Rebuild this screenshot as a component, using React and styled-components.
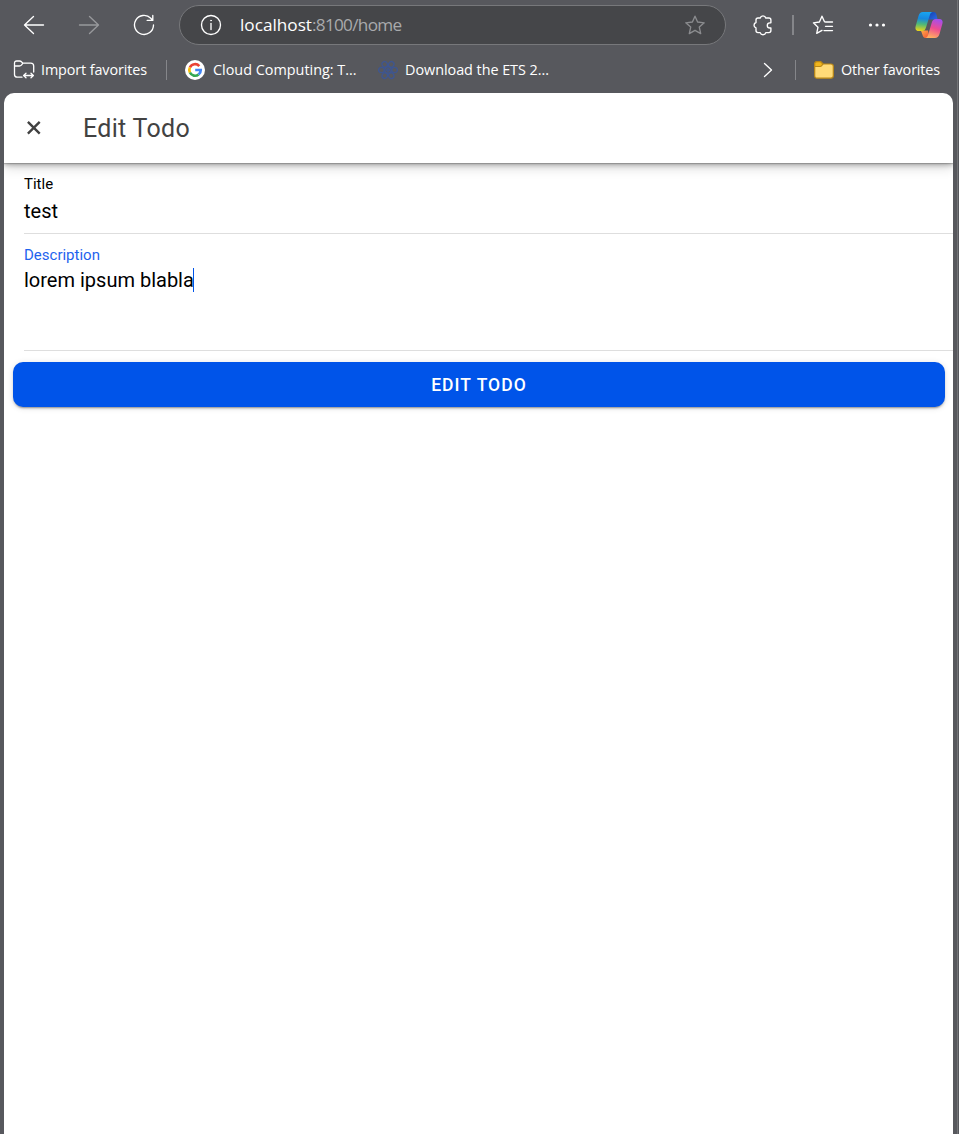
import React from "react";
import styled, { createGlobalStyle } from "styled-components";

const GlobalStyle = createGlobalStyle`
  * { box-sizing: border-box; }
  body { margin: 0; background: #57585d; overflow: hidden; }
`;

const Window = styled.div`
  width: 959px;
  height: 1134px;
  display: flex;
  flex-direction: column;
  padding: 0 4px 0 4px;
  background: linear-gradient(to right, #57585d 957px, #737477 957px, #737477 958px, #57585d 958px);
  overflow: hidden;
`;

const Toolbar = styled.div`
  height: 50px;
  flex: none;
  display: flex;
  align-items: center;
  padding-left: 2px;
`;

const IconSlot = styled.div`
  width: ${(p) => p.$width || 55}px;
  height: 40px;
  flex: none;
  display: flex;
  align-items: center;
  justify-content: center;
`;

const Address = styled.div`
  width: 547px;
  height: 40px;
  flex: none;
  margin: 0 7px 0 8px;
  padding: 0 19px 0 20px;
  border: 1px solid #77787b;
  border-radius: 20px;
  background: #454649;
  display: flex;
  align-items: center;
`;

const Url = styled.div`
  flex: 1;
  margin-left: 18px;
  padding-bottom: 1px;
  font: 17.2px/24px "Open Sans", "Noto Sans", sans-serif;
  letter-spacing: -0.72px;
  color: #a9aaac;
  white-space: nowrap;
`;

const Host = styled.span`
  color: #ffffff;
  letter-spacing: 0;
`;

const Divider = styled.div`
  width: ${(p) => p.$width}px;
  height: 20px;
  flex: none;
  background: #85868a;
`;

const Spacer = styled.span`
  width: ${(p) => p.$width || 10}px;
  flex: none;
`;

const Bookmarks = styled.div`
  height: 43px;
  flex: none;
  display: flex;
  align-items: center;
  padding: 0 13px 4px 9px;
`;

const Bookmark = styled.div`
  display: flex;
  align-items: center;
  gap: ${(p) => p.$gap}px;
  width: ${(p) => p.$width}px;
  flex: none;
`;

const BookmarkText = styled.span`
  font: 14.4px/20px "Open Sans", "Noto Sans", sans-serif;
  letter-spacing: ${(p) => p.$spacing}px;
  color: #ffffff;
  white-space: nowrap;
`;

const Overflow = styled.div`
  flex: 1;
  display: flex;
  justify-content: flex-end;
  padding-right: 22px;
`;

const Page = styled.main`
  width: 949px;
  flex: 1;
  background: #ffffff;
  border-radius: 10px 10px 0 0;
  overflow: hidden;
  font-family: Roboto, sans-serif;
`;

const Header = styled.header`
  height: 70px;
  display: flex;
  align-items: center;
  padding-left: 20px;
  box-shadow: 0 2px 5px rgba(0, 0, 0, 0.28), 0 4px 12px rgba(0, 0, 0, 0.16), 0 1px 1px rgba(0, 0, 0, 0.18);
`;

const Heading = styled.h1`
  margin: 2px 0 0 39px;
  font-size: 25px;
  line-height: 32px;
  font-weight: 400;
  letter-spacing: 0.3px;
  color: #424242;
`;

const Field = styled.div`
  height: ${(p) => p.$height}px;
  margin-left: 20px;
  padding-top: 11px;
  border-bottom: 1px solid #dedede;
`;

const Label = styled.div`
  font-size: 15px;
  line-height: 20px;
  color: ${(p) => (p.$focused ? "#1e63ee" : "#000000")};
`;

const Value = styled.div`
  display: flex;
  align-items: center;
  margin-top: ${(p) => p.$top}px;
  font-size: 20px;
  line-height: 26px;
  color: #000000;
`;

const Caret = styled.i`
  width: 1px;
  height: 24px;
  margin-left: -1px;
  background: #0054e9;
`;

const Submit = styled.button`
  display: block;
  width: 932px;
  height: 45px;
  margin: 11px 0 0 9px;
  padding: 2px 0 0;
  border: 0;
  border-radius: 10px;
  background: #0054e9;
  color: #ffffff;
  font: 500 17.5px/43px Roboto, sans-serif;
  letter-spacing: 1.05px;
  text-align: center;
  box-shadow: 0 3px 1px -2px rgba(0, 0, 0, 0.2), 0 2px 2px rgba(0, 0, 0, 0.14), 0 1px 6px rgba(0, 0, 0, 0.12);
`;

const Line = ({ w, h, children, color = "#fff", sw = 1.35, ...rest }) => (
  <svg width={w} height={h} viewBox={`0 0 ${w} ${h}`} fill="none" stroke={color} strokeWidth={sw} strokeLinecap="round" strokeLinejoin="round" {...rest}>
    {children}
  </svg>
);

const STAR = "M11 2.2l2.6 5.8 6.6.8-4.9 4.3 1.4 6.5-5.7-3.3-5.7 3.3 1.4-6.5-4.9-4.3 6.6-.8z";

const Back = () => <Line w={22} h={20}><path d="M10.500 1.500L1.500 10l9 8.500M1.500 10h19" /></Line>;
const Forward = () => <Line w={22} h={20} color="#98999c"><path d="M11.500 1.500l9 8.500-9 8.500M20.500 10H1.500" /></Line>;
const Reload = () => (
  <Line w={22} h={22}><path d="M20.500 11a9.500 9.500 0 1 1-2.700-6.700l1.700 1.900M19.800 1.400v5h-5.600" /></Line>
);
const Info = () => (
  <Line w={22} h={22}><circle cx="11" cy="11" r="9.500" /><path d="M11 9.500v6" /><circle cx="11" cy="6.600" r=".5" fill="#fff" strokeWidth=".7" /></Line>
);
const Star = () => <Line w={22} h={22} color="#8b8c8f"><path d={STAR} /></Line>;
const Puzzle = () => (
  <Line w={22} h={22}>
    <path d="M8.200 4a2.900 2.900 0 0 1 5.600 0h3.100c1.300 0 2 .7 2 2v2.800h-1a2.600 2.600 0 0 0 0 5.200h1v2.600c0 1.300-.7 2-2 2h-3.100a2.900 2.900 0 0 1-5.600 0H6c-1.300 0-2-.7-2-2V14a2.900 2.900 0 0 1 0-5.500V6c0-1.300.7-2 2-2z" />
  </Line>
);
const Favorites = () => (
  <Line w={22} h={22}>
    <path d="M13.600 7.800H12.500L10 2.200 7.400 8l-6 .8 4.600 4.400-1.300 6.200 5.300-3M13.500 8h7M13.500 12.300h7M12 16.600h8.500" />
  </Line>
);
const Dots = () => (
  <svg width="20" height="6" viewBox="0 0 20 6" fill="#fff"><circle cx="3.500" cy="3" r="1.600" /><circle cx="10" cy="3" r="1.600" /><circle cx="16.500" cy="3" r="1.600" /></svg>
);
const Copilot = () => (
  <svg width="28" height="26" viewBox="0 0 28 26">
    <defs>
      <linearGradient id="cpA" x1=".5" y1="0" x2=".4" y2="1">
        <stop offset="0" stopColor="#18a4f0" /><stop offset=".35" stopColor="#1688df" /><stop offset=".65" stopColor="#4fb978" /><stop offset="1" stopColor="#e7d51b" />
      </linearGradient>
      <linearGradient id="cpB" x1=".7" y1="0" x2=".4" y2="1">
        <stop offset="0" stopColor="#a34ef0" /><stop offset=".5" stopColor="#ee4c91" /><stop offset="1" stopColor="#ffae60" />
      </linearGradient>
      <linearGradient id="cpC" x1="0" y1="0" x2="1" y2="1">
        <stop offset="0" stopColor="#1441ae" /><stop offset="1" stopColor="#2a6be6" />
      </linearGradient>
      <linearGradient id="cpD" x1="0" y1="0" x2="1" y2="1">
        <stop offset="0" stopColor="#ffad48" /><stop offset="1" stopColor="#ef4d35" />
      </linearGradient>
    </defs>
    <path d="M14 0h4.500c1.800 0 2.600 1 3 2.700L22.600 7.500H13.500z" fill="url(#cpC)" />
    <path d="M7 18.500h6L14.500 26H10.500C7.500 26 7.500 21.500 6 19z" fill="url(#cpD)" />
    <path d="M7.800 0H17.500C15.800.3 15.200 1.800 14.700 3.500L11 15.500C10.200 18 9.300 19 7 19H3.500C.6 19 0 16.500.7 14L3.500 4C4.300 1.300 5.600 0 7.800 0z" fill="url(#cpA)" />
    <path d="M20 26H10.500C12 25.700 12.700 24 13.200 22.500L16.800 10.500C17.500 8.200 18.700 7 20.800 7H24.500C27.500 7 28.100 9.500 27.300 12L24.500 22C23.700 24.700 22.200 26 20 26z" fill="url(#cpB)" />
  </svg>
);
const ImportIcon = () => (
  <Line w={22} h={22} sw={1.3}>
    <path d="M9 18.200H4.300c-1.800 0-2.800-1-2.800-2.800V4.200C1.500 2.700 2.300 2 3.700 2H6.500c1 0 1.600.3 2.200 1l1.200 1.200h7.800c1.900 0 3 1 3 2.900v6M1.500 7h4.800c1 0 1.500-.2 2.100-.9l1.600-1.900M10.800 16.500h9.400M13 14.200l-2.400 2.300 2.400 2.300M18 14.200l2.400 2.300-2.400 2.300" />
  </Line>
);
const GoogleIcon = () => (
  <svg width="20" height="20" viewBox="0 0 20 20">
    <circle cx="10" cy="10" r="10" fill="#fff" />
    <g fill="none" strokeWidth="2.700">
      <path d="M14.300 6.100A5.700 5.700 0 0 0 4.900 7.500" stroke="#ea4335" />
      <path d="M4.900 7.500a5.700 5.700 0 0 0 0 5" stroke="#fbbc05" />
      <path d="M4.900 12.500a5.700 5.700 0 0 0 8.700 2" stroke="#34a853" />
      <path d="M13.600 14.500A5.700 5.700 0 0 0 15.700 10H10.200" stroke="#4285f4" />
    </g>
  </svg>
);
const FlowerIcon = () => (
  <svg width="20" height="20" viewBox="0 0 20 20" fill="none" stroke="#3f568f" strokeWidth="1.400">
    {[0, 60, 120, 180, 240, 300].map((a) => (
      <ellipse key={a} cx="16.500" cy="10" rx="2.900" ry="2.600" transform={`rotate(${a} 10 10)`} />
    ))}
    <circle cx="10" cy="10" r="3.200" />
    <path d="M8 10h4M10 8v4" />
  </svg>
);
const Chevron = () => <Line w={10} h={16}><path d="M1.500 1.500L8.500 8l-7 6.500" /></Line>;
const Folder = () => (
  <svg width="20" height="18" viewBox="0 0 20 18" stroke="#b98716" strokeWidth="1.200" strokeLinejoin="round">
    <path d="M.7 3.200C.7 1.600 1.400.7 3 .7h3.600L9 3h8c1.600 0 2.300.8 2.300 2.300v9.500c0 1.600-.8 2.400-2.400 2.400H3c-1.500 0-2.300-.8-2.300-2.400z" fill="#ffdb78" />
    <path d="M.7 5.500V3.200C.7 1.600 1.400.7 3 .7h3.600L9 3 7.500 4.900c-.5.500-.8.600-1.500.6z" fill="#f0b51c" />
  </svg>
);
const Close = () => (
  <svg width="20" height="20" viewBox="0 0 20 20" fill="none" stroke="#424242" strokeWidth="2.400"><path d="M3.900 3.900l11.800 11.800M15.700 3.900L3.900 15.700" /></svg>
);

export default function App() {
  return (
    <Window>
      <GlobalStyle />
      <Toolbar>
        <IconSlot><Back /></IconSlot>
        <IconSlot><Forward /></IconSlot>
        <IconSlot><Reload /></IconSlot>
        <Address>
          <Info />
          <Url><Host>localhost</Host>:8100/home</Url>
          <Star />
        </Address>
        <IconSlot $width={59}><Puzzle /></IconSlot>
        <Divider $width={2} />
        <IconSlot $width={57}><Favorites /></IconSlot>
        <IconSlot $width={52}><Dots /></IconSlot>
        <IconSlot $width={52}><Copilot /></IconSlot>
      </Toolbar>
      <Bookmarks>
        <Bookmark $gap={6} $width={153}><ImportIcon /><BookmarkText $spacing={-0.12}>Import favorites</BookmarkText></Bookmark>
        <Divider $width={1} />
        <Bookmark $gap={8} $width={211}>
          <Spacer /><GoogleIcon /><BookmarkText $spacing={0}>Cloud Computing: T...</BookmarkText>
        </Bookmark>
        <Bookmark $gap={7} $width={172}><FlowerIcon /><BookmarkText $spacing={-0.04}>Download the ETS 2...</BookmarkText></Bookmark>
        <Overflow><Chevron /></Overflow>
        <Divider $width={1} />
        <Spacer $width={18} />
        <Bookmark $gap={7} $width={128}><Folder /><BookmarkText $spacing={-0.14}>Other favorites</BookmarkText></Bookmark>
      </Bookmarks>
      <Page>
        <Header><Close /><Heading>Edit Todo</Heading></Header>
        <Field $height={71}>
          <Label>Title</Label>
          <Value $top={4}>test</Value>
        </Field>
        <Field $height={117}>
          <Label $focused>Description</Label>
          <Value $top={2}>lorem ipsum blabla<Caret /></Value>
        </Field>
        <Submit>EDIT TODO</Submit>
      </Page>
    </Window>
  );
}
